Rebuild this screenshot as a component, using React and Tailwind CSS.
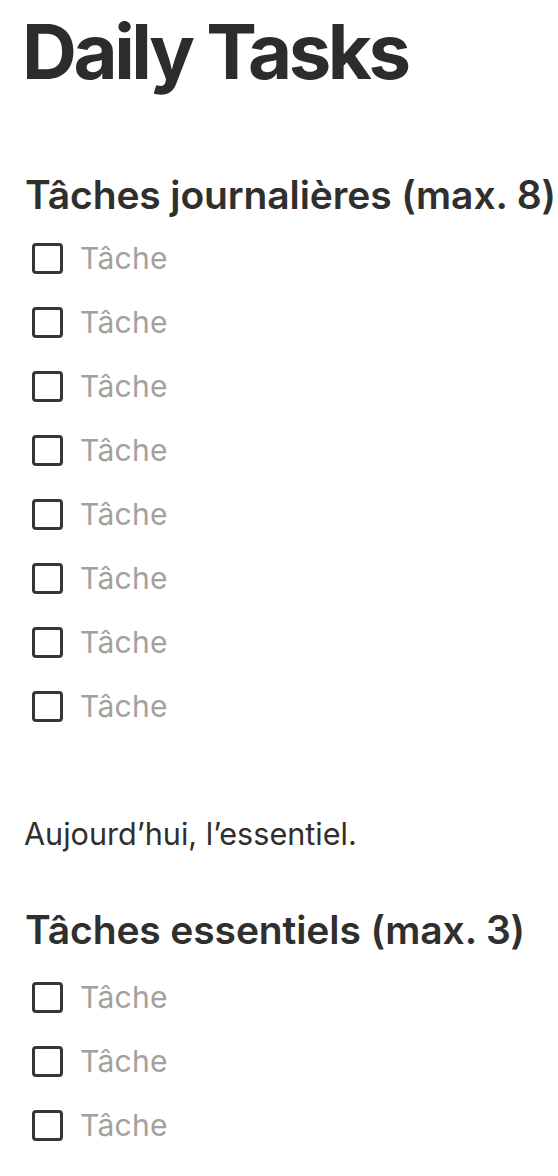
import { useState } from "react";

const font = { fontFamily: "Inter, 'Noto Sans', sans-serif" };

function TodoRow({ checked, onToggle }) {
  return (
    <div className="flex h-[64px] items-center">
      <button
        type="button"
        onClick={onToggle}
        className="ml-[8px] flex h-[31px] w-[31px] shrink-0 items-center justify-center rounded-[4px] border-[3px] border-[#363636] bg-white"
      >
        {checked && (
          <svg viewBox="0 0 14 14" className="h-[20px] w-[20px]">
            <path d="M2.5 7.5l3 3 6-7" fill="none" stroke="#363636" strokeWidth="2.2" />
          </svg>
        )}
      </button>
      <span className="ml-[17px] text-[30px] leading-[36px] tracking-[0.01em] text-[#a3a19c]">Tâche</span>
    </div>
  );
}

function TodoList({ count }) {
  const [done, setDone] = useState(() => Array(count).fill(false));
  return (
    <div className="flex flex-col">
      {done.map((value, index) => (
        <TodoRow
          key={index}
          checked={value}
          onToggle={() => setDone((prev) => prev.map((v, i) => (i === index ? !v : v)))}
        />
      ))}
    </div>
  );
}

export default function App() {
  return (
    <main className="min-h-[1176px] w-full overflow-hidden bg-white pl-[24px] text-[#2f2f2e]" style={font}>
      <h1 className="-ml-[2px] pt-[5px] text-[76px] font-bold leading-[92px] tracking-[-0.045em] text-[#2c2c2b]">
        Daily Tasks
      </h1>

      <h3 className="mt-[74px] whitespace-nowrap pl-[1px] text-[39px] font-semibold leading-[48px] tracking-[-0.003em]">
        Tâches journalières (max. 8)
      </h3>
      <div className="mt-[7px]">
        <TodoList count={8} />
      </div>

      <p className="mt-[78px] text-[30.6px] leading-[36px]">Aujourd’hui, l’essentiel.</p>

      <h3 className="mt-[54px] whitespace-nowrap pl-[1px] text-[39px] font-semibold leading-[48px] tracking-[-0.003em]">
        Tâches essentiels (max. 3)
      </h3>
      <div className="mt-[11px]">
        <TodoList count={3} />
      </div>
    </main>
  );
}
